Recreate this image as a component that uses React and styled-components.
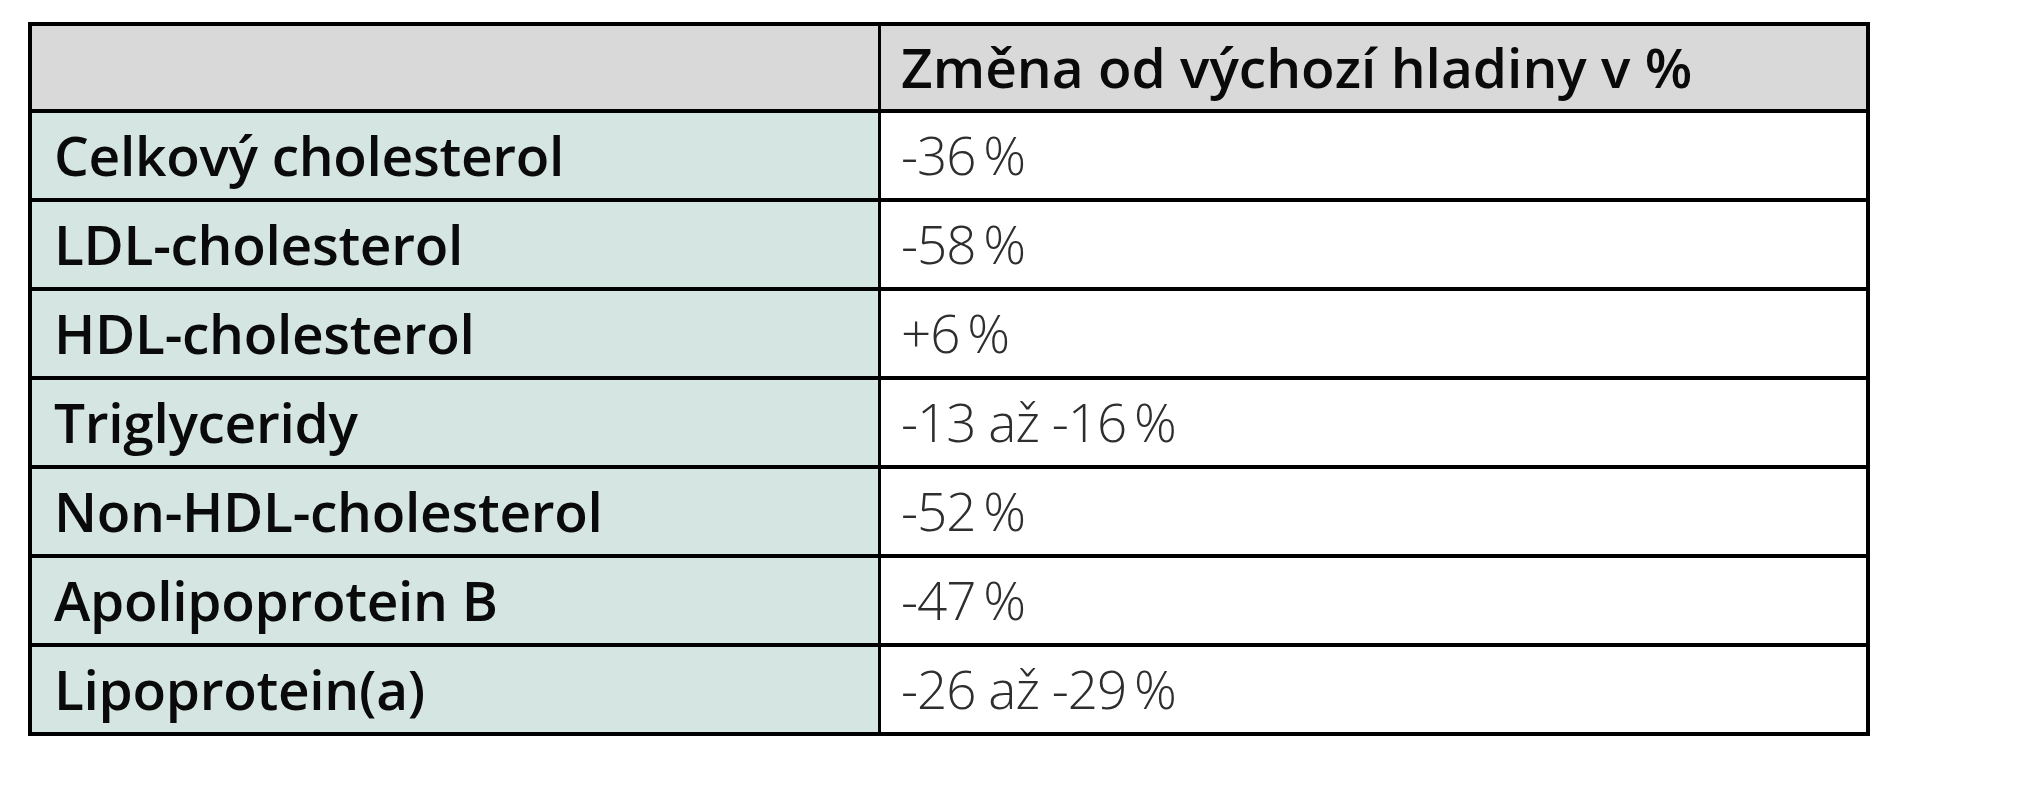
import React from "react";
import styled, { createGlobalStyle } from "styled-components";

const GlobalStyle = createGlobalStyle`
  html, body {
    margin: 0;
    padding: 0;
    background: #ffffff;
  }
  body {
    font-family: "Open Sans", "Noto Sans", sans-serif;
  }
`;

const Page = styled.div`
  padding: 22px 0 0 28px;
`;

const Table = styled.table`
  width: 1842px;
  border-collapse: collapse;
  border: 4px solid #000;
`;

const HeadRow = styled.tr`
  height: 87px;
  background: #d9d9d9;
`;

const Row = styled.tr`
  height: 89px;
`;

const Cell = styled.td`
  border-top: 4px solid #000;
  border-bottom: 4px solid #000;
  border-left: 3px solid #000;
  border-right: 3px solid #000;
  padding: 0 0 2px 22px;
  vertical-align: middle;
  line-height: 1;
  white-space: nowrap;
`;

const HeadCell = styled(Cell)`
  padding-left: 20px;
  font-size: 55px;
  font-weight: 600;
  color: #0a0a0a;
`;

const LabelCell = styled(Cell)`
  width: 824px;
  background: #d5e6e2;
  font-size: 55px;
  font-weight: 600;
  color: #0a0a0a;
  letter-spacing: -0.3px;
`;

const ValueCell = styled(Cell)`
  padding-left: 20px;
  background: #ffffff;
  font-size: 53px;
  font-weight: 300;
  color: #2e2e2e;
  letter-spacing: -1px;
`;

const rows = [
  ["Celkový cholesterol", "-36\u2009%"],
  ["LDL-cholesterol", "-58\u2009%"],
  ["HDL-cholesterol", "+6\u2009%"],
  ["Triglyceridy", "-13 až -16\u2009%"],
  ["Non-HDL-cholesterol", "-52\u2009%"],
  ["Apolipoprotein B", "-47\u2009%"],
  ["Lipoprotein(a)", "-26 až -29\u2009%"],
];

export default function App() {
  return (
    <>
      <GlobalStyle />
      <Page>
        <Table>
          <tbody>
            <HeadRow>
              <HeadCell />
              <HeadCell>Změna od výchozí hladiny v %</HeadCell>
            </HeadRow>
            {rows.map(([label, value]) => (
              <Row key={label}>
                <LabelCell>{label}</LabelCell>
                <ValueCell>{value}</ValueCell>
              </Row>
            ))}
          </tbody>
        </Table>
      </Page>
    </>
  );
}
